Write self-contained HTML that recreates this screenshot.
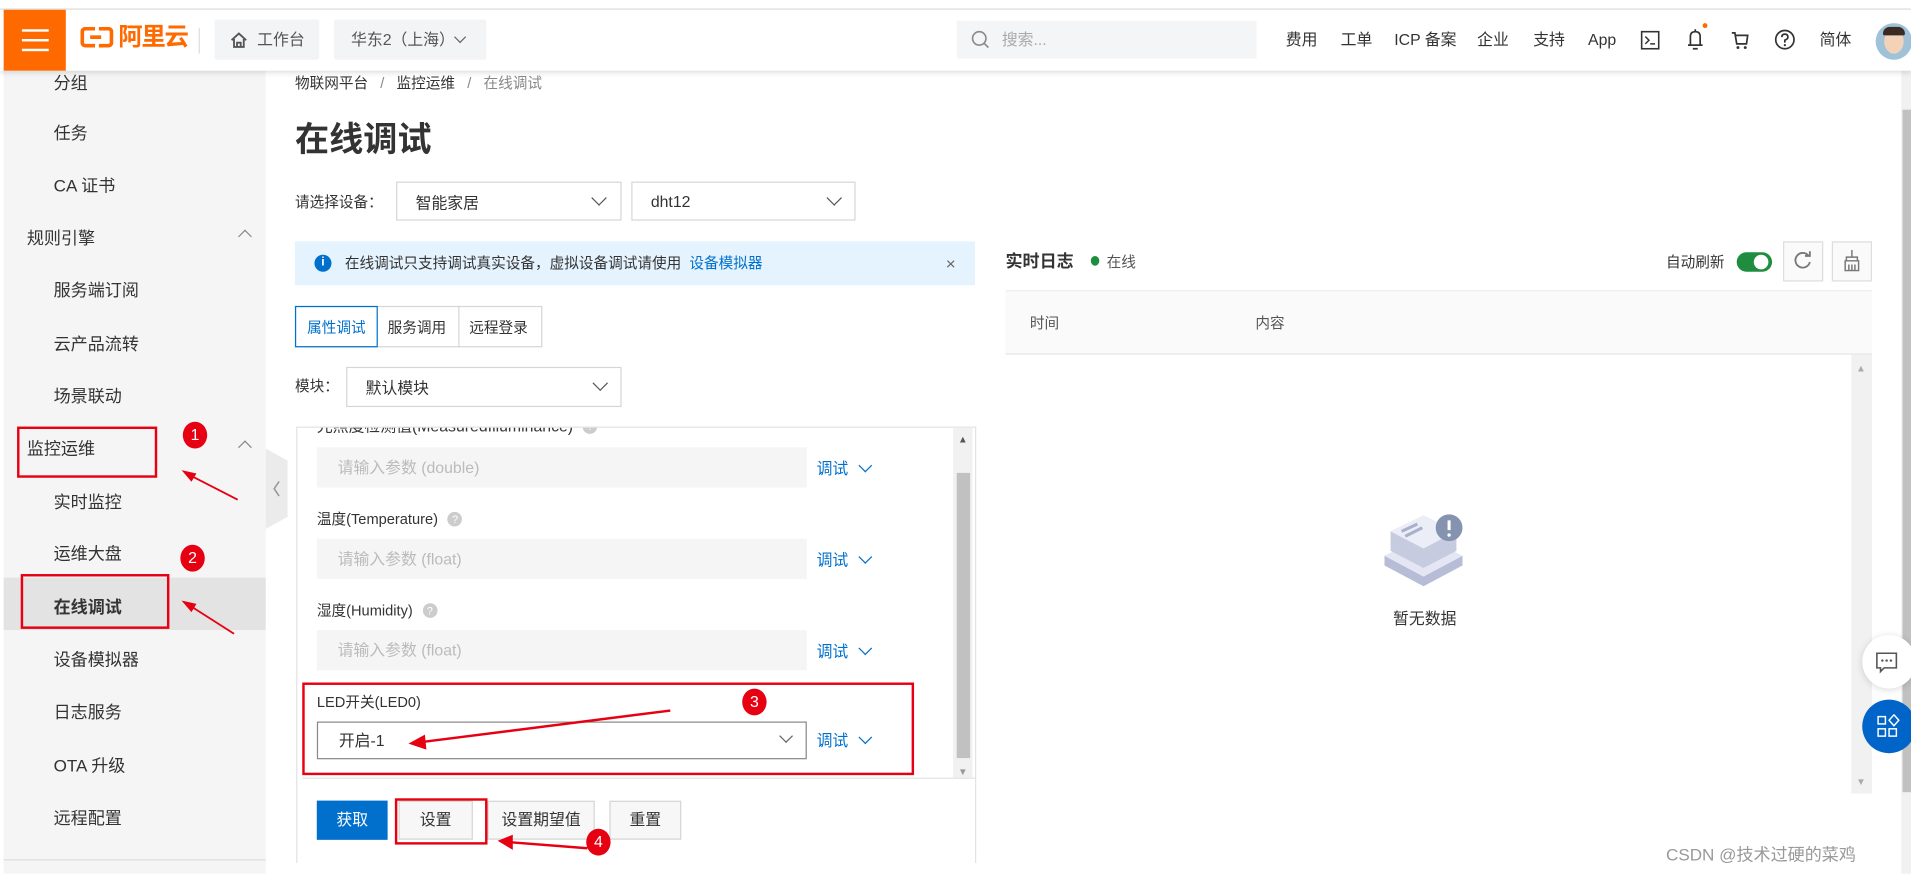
<!DOCTYPE html>
<html><head><meta charset="utf-8">
<style>
*{box-sizing:border-box;margin:0;padding:0}
html,body{width:1911px;height:874px;overflow:hidden;background:#fff}
body{font-family:"Liberation Sans","Noto Sans CJK SC",sans-serif;color:#333}
#r{position:absolute;left:0;top:0;width:1568px;height:717px;transform:scale(1.21875);transform-origin:0 0;overflow:hidden;background:#fff}
.a{position:absolute}
.t{position:absolute;white-space:nowrap;font-size:14px;line-height:18px}
.sel{position:absolute;border:1px solid #d6d6d6;background:#fff;font-size:13px;padding-left:15px;display:flex;align-items:center}
.chev{position:absolute;width:9px;height:9px;border-right:1.5px solid #555;border-bottom:1.5px solid #555;transform:rotate(45deg)}
.up{position:absolute;width:8px;height:8px;border-left:1.5px solid #888;border-top:1.5px solid #888;transform:rotate(45deg)}
.inp{position:absolute;left:260px;width:402px;height:33px;background:#f5f5f5;color:#bbb;font-size:13px;padding-left:17px;line-height:33px}
.dbg{position:absolute;left:670px;color:#0070cc;font-size:13px;line-height:16px}
.dbg i{display:inline-block;width:8px;height:8px;border-right:1.5px solid #0070cc;border-bottom:1.5px solid #0070cc;transform:rotate(45deg);margin-left:10px;position:relative;top:-3px}
.q{display:inline-block;width:12px;height:12px;border-radius:50%;background:#ccc;color:#fff;font-size:9px;text-align:center;line-height:12px;margin-left:8px;vertical-align:1px}
.red{position:absolute;border:2px solid #e60012}
.num{position:absolute;width:20px;height:22px;border-radius:50%;background:#e60012;color:#fff;font-size:13px;text-align:center;line-height:22px}
.btn{position:absolute;top:657px;height:32px;border:1px solid #d6d6d6;background:#f7f7f7;font-size:13px;text-align:center;line-height:30px}
.nav{position:absolute;top:16px;font-size:13px;color:#333;line-height:18px;white-space:nowrap}
.side{position:absolute;left:44px;font-size:14px;color:#333;line-height:18px}
</style></head><body><div id="r">
<div class="a" style="left:0;top:7px;width:1568px;height:1px;background:#ddd"></div>
<div class="a" style="left:0;top:8px;width:1568px;height:50px;background:#fff;box-shadow:0 2px 4px rgba(0,0,0,.12);z-index:3">
 <div class="a" style="left:3px;top:0;width:51px;height:50px;background:#ff6a00">
  <div class="a" style="left:15px;top:16px;width:22px;height:2px;background:#fff"></div>
  <div class="a" style="left:15px;top:24px;width:22px;height:2px;background:#fff"></div>
  <div class="a" style="left:15px;top:32px;width:22px;height:2px;background:#fff"></div>
 </div>
 <div class="a" style="left:66px;top:14px;width:12px;height:17px;border:3px solid #ff6a00;border-right:none;border-radius:4px 0 0 4px"></div>
 <div class="a" style="left:74px;top:21px;width:9px;height:3px;background:#ff6a00"></div>
 <div class="a" style="left:81px;top:14px;width:12px;height:17px;border:3px solid #ff6a00;border-left:none;border-radius:0 4px 4px 0"></div>
 <div class="t" style="left:97px;top:12px;font-size:20px;line-height:22px;font-weight:bold;color:#ff6a00;letter-spacing:-1px">阿里云</div>
 <div class="a" style="left:163px;top:15px;width:1px;height:21px;background:#ddd"></div>
 <div class="a" style="left:176px;top:8px;width:86px;height:33px;background:#f3f4f6;border-radius:2px"></div>
 <svg class="a" style="left:189px;top:18px" width="14" height="14" viewBox="0 0 14 14"><path d="M1 7 L7 1.5 L13 7 M3 6 V12.5 H11 V6 M5.5 12.5 V9 H8.5 V12.5" fill="none" stroke="#555" stroke-width="1.5"/></svg>
 <div class="t" style="left:211px;top:16px;font-size:13px;color:#555">工作台</div>
 <div class="a" style="left:274px;top:8px;width:125px;height:33px;background:#f3f4f6;border-radius:2px"></div>
 <div class="t" style="left:288px;top:16px;font-size:13px;color:#555">华东2（上海）</div>
 <div class="chev" style="left:374px;top:19px;width:7px;height:7px;border-color:#666"></div>
 <div class="a" style="left:785px;top:9px;width:246px;height:31px;background:#f4f5f7"></div>
 <svg class="a" style="left:797px;top:17px" width="15" height="15" viewBox="0 0 15 15"><circle cx="6.5" cy="6.5" r="5.5" fill="none" stroke="#888" stroke-width="1.3"/><path d="M10.5 10.5 L14 14" stroke="#888" stroke-width="1.3"/></svg>
 <div class="t" style="left:822px;top:16px;font-size:13px;color:#aaa">搜索...</div>
 <div class="nav" style="left:1055px">费用</div>
 <div class="nav" style="left:1100px">工单</div>
 <div class="nav" style="left:1144px">ICP 备案</div>
 <div class="nav" style="left:1212px">企业</div>
 <div class="nav" style="left:1258px">支持</div>
 <div class="nav" style="left:1303px">App</div>
 <svg class="a" style="left:1346px;top:17px" width="16" height="16" viewBox="0 0 16 16"><rect x="1" y="1" width="14" height="14" fill="none" stroke="#333" stroke-width="1.3"/><path d="M4 5 L7 8 L4 11 M8 11 H12" fill="none" stroke="#333" stroke-width="1.2"/></svg>
 <svg class="a" style="left:1383px;top:15px" width="16" height="19" viewBox="0 0 16 19"><path d="M4 14 V7 Q4 3 8 3 Q12 3 12 7 V14 Z M2 14 H14 M6 17 H10 M8 1 V3" fill="none" stroke="#333" stroke-width="1.4"/></svg>
 <div class="a" style="left:1397px;top:11px;width:4px;height:4px;border-radius:50%;background:#ff6a00"></div>
 <svg class="a" style="left:1420px;top:17px" width="16" height="16" viewBox="0 0 16 16"><path d="M1 2 H3.5 L5 11 H13 L14 4 H4" fill="none" stroke="#333" stroke-width="1.4"/><circle cx="6" cy="14" r="1.2" fill="#333"/><circle cx="12" cy="14" r="1.2" fill="#333"/></svg>
 <svg class="a" style="left:1456px;top:16px" width="17" height="17" viewBox="0 0 17 17"><circle cx="8.5" cy="8.5" r="7.5" fill="none" stroke="#333" stroke-width="1.4"/><path d="M6 6.5 Q6 4 8.5 4 Q11 4 11 6.5 Q11 8 8.5 9 V11" fill="none" stroke="#333" stroke-width="1.4"/><circle cx="8.5" cy="13" r="0.9" fill="#333"/></svg>
 <div class="nav" style="left:1493px">简体</div>
 <div class="a" style="left:1539px;top:11px;width:30px;height:30px;border-radius:50%;background:#9fc2d8;overflow:hidden"><div class="a" style="left:7px;top:5px;width:16px;height:20px;border-radius:50%;background:#f3d3b8"></div><div class="a" style="left:6px;top:3px;width:18px;height:7px;border-radius:8px 8px 2px 2px;background:#3a2a22"></div></div>
</div>
<div class="a" style="left:3px;top:58px;width:215px;height:659px;background:#f5f5f5"></div>
<div class="a" style="left:3px;top:474px;width:215px;height:43px;background:#e3e3e3"></div>
<div class="a" style="left:3px;top:705px;width:215px;height:1px;background:#ddd"></div>
<div class="side" style="top:59px">分组</div>
<div class="side" style="top:100px">任务</div>
<div class="side" style="top:143px">CA 证书</div>
<div class="side" style="left:22px;top:186px">规则引擎</div><div class="up" style="left:197px;top:190px"></div>
<div class="side" style="top:229px">服务端订阅</div>
<div class="side" style="top:273px">云产品流转</div>
<div class="side" style="top:316px">场景联动</div>
<div class="side" style="left:22px;top:359px">监控运维</div><div class="up" style="left:197px;top:363px"></div>
<div class="side" style="top:403px">实时监控</div>
<div class="side" style="top:445px">运维大盘</div>
<div class="side" style="top:489px;font-weight:bold">在线调试</div>
<div class="side" style="top:532px">设备模拟器</div>
<div class="side" style="top:575px">日志服务</div>
<div class="side" style="top:619px">OTA 升级</div>
<div class="side" style="top:662px">远程配置</div>
<svg class="a" style="left:218px;top:368px" width="18" height="66" viewBox="0 0 18 66"><path d="M0 0 L18 10 V56 L0 66 Z" fill="#ebebeb"/><path d="M11 27 L7 33 L11 39" fill="none" stroke="#999" stroke-width="1.3"/></svg>
<div class="t" style="left:242px;top:59px;font-size:12px;color:#333">物联网平台&nbsp;&nbsp;&nbsp;<span style="color:#888">/</span>&nbsp;&nbsp;&nbsp;监控运维&nbsp;&nbsp;&nbsp;<span style="color:#888">/</span>&nbsp;&nbsp;&nbsp;<span style="color:#888">在线调试</span></div>
<div class="t" style="left:242px;top:99px;font-size:28px;line-height:32px;font-weight:bold;color:#333">在线调试</div>
<div class="t" style="left:242px;top:157px;font-size:12px">请选择设备：</div>
<div class="sel" style="left:325px;top:149px;width:185px;height:32px">智能家居</div><div class="chev" style="left:487px;top:158px"></div>
<div class="sel" style="left:518px;top:149px;width:184px;height:32px">dht12</div><div class="chev" style="left:680px;top:158px"></div>
<div class="a" style="left:242px;top:198px;width:558px;height:36px;background:#e5f3fe"></div>
<div class="a" style="left:258px;top:209px;width:14px;height:14px;border-radius:50%;background:#0070cc;color:#fff;font-size:10px;font-weight:bold;text-align:center;line-height:14px">i</div>
<div class="t" style="left:283px;top:207px;font-size:12px;color:#333">在线调试只支持调试真实设备，虚拟设备调试请使用&nbsp;&nbsp;<span style="color:#0070cc">设备模拟器</span></div>
<div class="t" style="left:776px;top:207px;font-size:14px;color:#666">×</div>
<div class="a" style="left:242px;top:251px;width:203px;height:34px;border:1px solid #d6d6d6"></div>
<div class="a" style="left:242px;top:251px;width:68px;height:34px;border:1px solid #0070cc"></div>
<div class="a" style="left:376px;top:251px;width:1px;height:34px;background:#d6d6d6"></div>
<div class="t" style="left:252px;top:260px;font-size:12px;color:#0070cc">属性调试</div>
<div class="t" style="left:318px;top:260px;font-size:12px">服务调用</div>
<div class="t" style="left:385px;top:260px;font-size:12px">远程登录</div>
<div class="t" style="left:242px;top:308px;font-size:12px">模块：</div>
<div class="sel" style="left:284px;top:301px;width:226px;height:33px">默认模块</div><div class="chev" style="left:488px;top:310px"></div>
<div class="a" style="left:243px;top:350px;width:558px;height:358px;border:1px solid #e3e3e3;border-bottom:none"></div>
<div class="a" style="left:248px;top:638px;width:552px;height:1px;background:#e3e3e3"></div>
<div class="a" style="left:782px;top:351px;width:16px;height:287px;background:#f1f1f1"></div>
<div class="a" style="left:785px;top:388px;width:11px;height:234px;background:#c1c1c1"></div>
<div class="t" style="left:786px;top:352px;font-size:8px;color:#555">▲</div>
<div class="t" style="left:786px;top:625px;font-size:8px;color:#999">▼</div>
<div class="a" style="left:248px;top:351px;width:533px;height:10px;overflow:hidden"><div class="t" style="left:12px;top:-10px;font-size:13px">光照度检测值(MeasuredIlluminance)<span class="q">?</span></div></div>
<div class="inp" style="top:367px">请输入参数 (double)</div><div class="dbg" style="top:377px">调试<i></i></div>
<div class="t" style="left:260px;top:417px;font-size:12px">温度(Temperature)<span class="q">?</span></div>
<div class="inp" style="top:442px">请输入参数 (float)</div><div class="dbg" style="top:452px">调试<i></i></div>
<div class="t" style="left:260px;top:492px;font-size:12px">湿度(Humidity)<span class="q">?</span></div>
<div class="inp" style="top:517px">请输入参数 (float)</div><div class="dbg" style="top:527px">调试<i></i></div>
<div class="t" style="left:260px;top:567px;font-size:12px">LED开关(LED0)</div>
<div class="a" style="left:260px;top:592px;width:402px;height:31px;border:1px solid #888;font-size:13px;line-height:29px;padding-left:17px">开启-1</div>
<div class="chev" style="left:641px;top:600px;width:8px;height:8px;border-color:#666"></div>
<div class="dbg" style="top:600px">调试<i></i></div>
<div class="btn" style="left:260px;width:58px;background:#0070cc;border-color:#0070cc;color:#fff">获取</div>
<div class="btn" style="left:327px;width:61px">设置</div>
<div class="btn" style="left:400px;width:88px">设置期望值</div>
<div class="btn" style="left:500px;width:59px">重置</div>
<div class="t" style="left:825px;top:205px;font-size:14px;font-weight:bold">实时日志</div>
<div class="a" style="left:895px;top:210px;width:7px;height:8px;border-radius:50%;background:#1e8e3e"></div>
<div class="t" style="left:908px;top:206px;font-size:12px;color:#555">在线</div>
<div class="t" style="left:1367px;top:206px;font-size:12px;color:#333">自动刷新</div>
<div class="a" style="left:1425px;top:207px;width:29px;height:16px;border-radius:8px;background:#1e8e3e"><div class="a" style="left:14px;top:2px;width:12px;height:12px;border-radius:50%;background:#fff"></div></div>
<div class="a" style="left:1463px;top:198px;width:33px;height:33px;border:1px solid #ddd;background:#fafafa"></div>
<svg class="a" style="left:1472px;top:206px" width="15" height="16" viewBox="0 0 15 16"><path d="M12 4 A6 6 0 1 0 13 9" fill="none" stroke="#777" stroke-width="1.5"/><path d="M9 4 H13 V0" fill="none" stroke="#777" stroke-width="1.5"/></svg>
<div class="a" style="left:1503px;top:198px;width:33px;height:33px;border:1px solid #ddd;background:#fafafa"></div>
<svg class="a" style="left:1512px;top:205px" width="15" height="18" viewBox="0 0 15 18"><path d="M7.5 0 V6 M3 6 H12 V9 H3 Z M2 9 H13 V17 H2 Z M5 12 V17 M7.5 12 V17 M10 12 V17" fill="none" stroke="#777" stroke-width="1.2"/></svg>
<div class="a" style="left:825px;top:238px;width:711px;height:53px;background:#fafafa;border-top:1px solid #eee;border-bottom:1px solid #e6e6e6"></div>
<div class="t" style="left:845px;top:256px;font-size:12px;color:#555">时间</div>
<div class="t" style="left:1030px;top:256px;font-size:12px;color:#555">内容</div>
<div class="a" style="left:1519px;top:291px;width:17px;height:360px;background:#f1f1f1"></div>
<div class="t" style="left:1523px;top:294px;font-size:8px;color:#aaa">▲</div>
<div class="t" style="left:1523px;top:633px;font-size:8px;color:#aaa">▼</div>
<svg class="a" style="left:1133px;top:418px" width="70" height="64" viewBox="0 0 70 64"><path d="M3 38 L35 55 L67 38 L67 46 L35 63 L3 46 Z" fill="#b7bdd6"/><path d="M3 38 L35 22 L67 38 L35 55 Z" fill="#e4e7f3"/><path d="M8 18 L35 5 L62 18 L62 34 L35 48 L8 34 Z" fill="#c6cbe0"/><path d="M8 18 L35 5 L62 18 L35 32 Z" fill="#eceef7"/><path d="M17 18 L30 12 M20 22 L34 15" stroke="#a9b0cb" stroke-width="2.5"/><circle cx="56" cy="15" r="11" fill="#8593b0"/><path d="M56 9 V17" stroke="#fff" stroke-width="2.5"/><circle cx="56" cy="21" r="1.4" fill="#fff"/></svg>
<div class="t" style="left:1143px;top:499px;font-size:13px;color:#333">暂无数据</div>
<div class="a" style="left:1560px;top:58px;width:8px;height:659px;background:#f1f1f1"></div>
<div class="a" style="left:1561px;top:90px;width:7px;height:560px;background:#c1c1c1"></div>
<div class="a" style="left:1528px;top:521px;width:44px;height:44px;border-radius:50%;background:#fff;box-shadow:0 1px 6px rgba(0,0,0,.15)"></div>
<svg class="a" style="left:1539px;top:535px" width="18" height="18" viewBox="0 0 18 18"><path d="M1 1 H17 V13 H7 L4 16 V13 H1 Z" fill="none" stroke="#555" stroke-width="1.3"/><circle cx="5.5" cy="7" r="1" fill="#555"/><circle cx="9" cy="7" r="1" fill="#555"/><circle cx="12.5" cy="7" r="1" fill="#555"/></svg>
<div class="a" style="left:1528px;top:574px;width:44px;height:44px;border-radius:50%;background:#0064c8"></div>
<svg class="a" style="left:1540px;top:586px" width="19" height="20" viewBox="0 0 19 20"><rect x="1" y="2" width="6" height="6" fill="none" stroke="#fff" stroke-width="1.2"/><path d="M14 0.5 L18 5 L14 9.5 L10 5 Z" fill="none" stroke="#fff" stroke-width="1.2"/><rect x="1" y="12" width="6" height="6" fill="none" stroke="#fff" stroke-width="1.2"/><rect x="10" y="12" width="6" height="6" fill="none" stroke="#fff" stroke-width="1.2"/></svg>
<div class="t" style="left:1367px;top:692px;font-size:14px;color:#999">CSDN @技术过硬的菜鸡</div>
<div class="red" style="left:14px;top:350px;width:115px;height:42px"></div>
<div class="red" style="left:17px;top:471px;width:122px;height:45px"></div>
<div class="red" style="left:248px;top:560px;width:502px;height:76px"></div>
<div class="red" style="left:324px;top:655px;width:76px;height:38px"></div>
<div class="num" style="left:150px;top:346px">1</div>
<div class="num" style="left:148px;top:447px">2</div>
<div class="num" style="left:609px;top:565px">3</div>
<div class="num" style="left:481px;top:680px">4</div>
<svg class="a" style="left:0;top:0" width="1568" height="717"><g stroke="#e60012" fill="#e60012" stroke-width="1.5"><path d="M195 410 L156 390"/><path d="M151 387 L160 389 L157 394 Z"/><path d="M192 520 L156 497"/><path d="M151 494 L160 496 L157 501 Z"/><path d="M550 583 L345 609" stroke-width="2"/><path d="M337 610 L348 604 L349 614 Z"/><path d="M482 696 L418 691" stroke-width="2"/><path d="M410 690 L420 686 L420 696 Z"/></g></svg>
</div></body></html>
